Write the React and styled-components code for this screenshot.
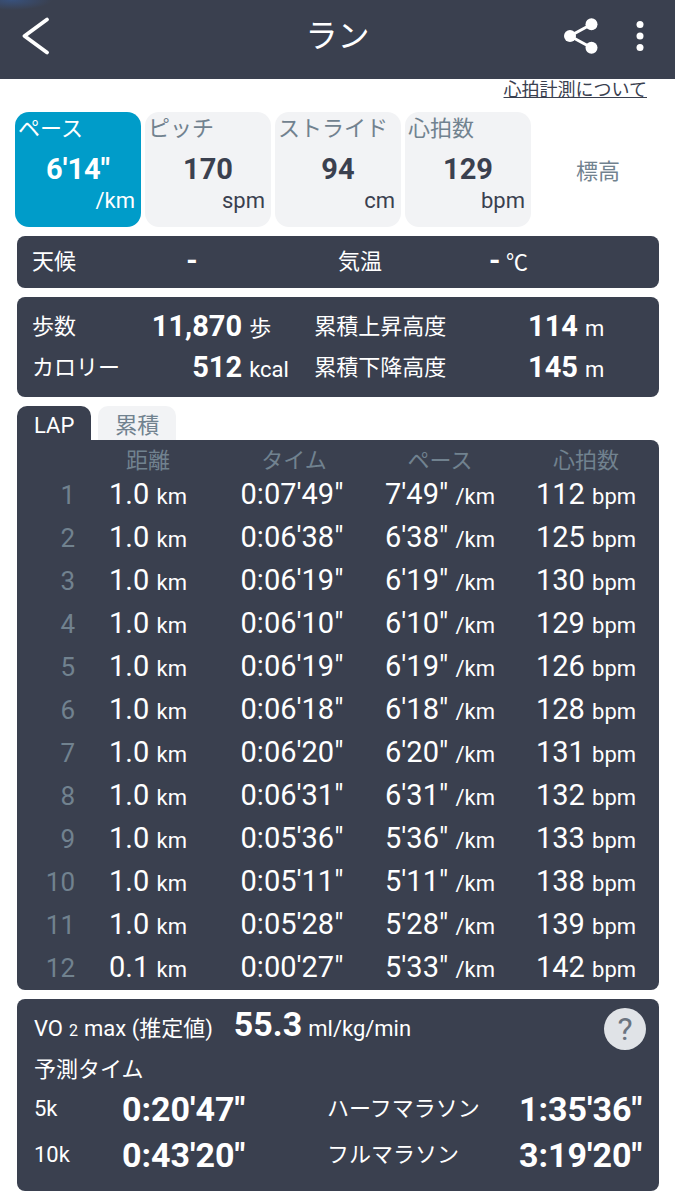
import React, { useState } from "react";
import styled, { createGlobalStyle } from "styled-components";

const metrics = [
  { label: "ペース", value: "6'14\"", unit: "/km" },
  { label: "ピッチ", value: "170", unit: "spm" },
  { label: "ストライド", value: "94", unit: "cm" },
  { label: "心拍数", value: "129", unit: "bpm" },
];

const laps = [
  ["1.0", "0:07'49\"", "7'49\"", "112"],
  ["1.0", "0:06'38\"", "6'38\"", "125"],
  ["1.0", "0:06'19\"", "6'19\"", "130"],
  ["1.0", "0:06'10\"", "6'10\"", "129"],
  ["1.0", "0:06'19\"", "6'19\"", "126"],
  ["1.0", "0:06'18\"", "6'18\"", "128"],
  ["1.0", "0:06'20\"", "6'20\"", "131"],
  ["1.0", "0:06'31\"", "6'31\"", "132"],
  ["1.0", "0:05'36\"", "5'36\"", "133"],
  ["1.0", "0:05'11\"", "5'11\"", "138"],
  ["1.0", "0:05'28\"", "5'28\"", "139"],
  ["0.1", "0:00'27\"", "5'33\"", "142"],
];

const App = () => {
  const [metric, setMetric] = useState(0);
  const [tab, setTab] = useState("lap");

  return (
    <>
      <GlobalStyle />
      <Header>
        <IconButton aria-label="戻る">
          <svg width="28" height="40" viewBox="0 0 28 40" fill="none">
            <path
              d="M25 3.5 2.5 20 25 36.5"
              stroke="#fff"
              strokeWidth="3.8"
              strokeLinecap="round"
              strokeLinejoin="round"
            />
          </svg>
        </IconButton>
        <Title>ラン</Title>
        <Actions>
          <IconButton aria-label="共有">
            <svg width="34" height="36" viewBox="0 0 34 36" fill="#fff">
              <path d="M28 6 6 18l22 12" fill="none" stroke="#fff" strokeWidth="3" />
              <circle cx="6" cy="18" r="6" />
              <circle cx="27.5" cy="6.2" r="6" />
              <circle cx="27.5" cy="29.8" r="6" />
            </svg>
          </IconButton>
          <MenuButton aria-label="メニュー">
            <svg width="8" height="32" viewBox="0 0 8 32" fill="#fff">
              <circle cx="4" cy="4.4" r="3.5" />
              <circle cx="4" cy="16" r="3.5" />
              <circle cx="4" cy="27.6" r="3.5" />
            </svg>
          </MenuButton>
        </Actions>
      </Header>

      <LinkRow>
        <a href="#heart-rate">心拍計測について</a>
      </LinkRow>

      <Metrics>
        {metrics.map((m, i) => (
          <MetricCard
            key={m.label}
            $active={metric === i}
            aria-pressed={metric === i}
            onClick={() => setMetric(i)}
          >
            <MetricLabel>{m.label}</MetricLabel>
            <MetricValue>{m.value}</MetricValue>
            <MetricUnit>{m.unit}</MetricUnit>
          </MetricCard>
        ))}
        <PlainMetric>標高</PlainMetric>
      </Metrics>

      <Main>
        <Weather>
          <dt>天候</dt>
          <dd>
            <Value>-</Value>
          </dd>
          <dt>気温</dt>
          <dd>
            <Value>-</Value> <Unit>℃</Unit>
          </dd>
        </Weather>

        <Stats>
          <Stat label="歩数" value="11,870" unit="歩" />
          <Stat label="累積上昇高度" value="114" unit="m" />
          <Stat label="カロリー" value="512" unit="kcal" />
          <Stat label="累積下降高度" value="145" unit="m" />
        </Stats>

        <section>
          <Tabs role="tablist">
            <Tab role="tab" $active={tab === "lap"} aria-selected={tab === "lap"} onClick={() => setTab("lap")}>
              LAP
            </Tab>
            <Tab role="tab" $active={tab === "total"} aria-selected={tab === "total"} onClick={() => setTab("total")}>
              累積
            </Tab>
          </Tabs>
          <LapPanel>
            <LapTable>
              <thead>
                <tr>
                  <td />
                  <th scope="col">距離</th>
                  <th scope="col">タイム</th>
                  <th scope="col">ペース</th>
                  <th scope="col">心拍数</th>
                </tr>
              </thead>
              <tbody>
                {laps.map(([distance, time, pace, heartRate], i) => (
                  <tr key={i}>
                    <th scope="row">{i + 1}</th>
                    <td>
                      {distance} <Unit>km</Unit>
                    </td>
                    <TimeCell>{time}</TimeCell>
                    <td>
                      {pace} <Unit>/km</Unit>
                    </td>
                    <td>
                      {heartRate} <Unit>bpm</Unit>
                    </td>
                  </tr>
                ))}
              </tbody>
            </LapTable>
          </LapPanel>
        </section>

        <Forecast>
          <VoRow>
            <VoText>
              <span>VO</span>
              <small>2</small>
              <span>max (推定値)</span>
              <BigValue>55.3</BigValue>
              <span>ml/kg/min</span>
            </VoText>
            <HelpButton aria-label="ヘルプ">?</HelpButton>
          </VoRow>
          <ForecastTitle>予測タイム</ForecastTitle>
          <ForecastGrid>
            <dt>5k</dt>
            <dd>0:20'47"</dd>
            <dt>ハーフマラソン</dt>
            <dd>1:35'36"</dd>
            <dt>10k</dt>
            <dd>0:43'20"</dd>
            <dt>フルマラソン</dt>
            <dd>3:19'20"</dd>
          </ForecastGrid>
        </Forecast>
      </Main>
    </>
  );
};

const Stat = ({ label, value, unit }) => (
  <StatItem>
    <dt>{label}</dt>
    <dd>
      <Value>{value}</Value>
      <Unit>{unit}</Unit>
    </dd>
  </StatItem>
);

const navy = "#3a404f";
const muted = "#71828f";
const pale = "#f2f3f5";

const GlobalStyle = createGlobalStyle`
  * {
    box-sizing: border-box;
  }
  body {
    margin: 0;
    background: #fff;
    color: #fff;
    font: 22px/32px Roboto, "Noto Sans CJK JP", sans-serif;
  }
  button {
    border: 0;
    padding: 0;
    background: none;
    color: inherit;
    font: inherit;
    cursor: pointer;
  }
  dl, dd {
    margin: 0;
  }
`;

const Header = styled.header`
  display: grid;
  grid-template-columns: 1fr auto 1fr;
  align-items: center;
  height: 79px;
  padding: 0 22px 8px;
  background: radial-gradient(40px 10px at 12px 0, #38517c, ${navy});
`;

const Title = styled.h1`
  margin: 0;
  font-size: 32px;
  font-weight: 400;
  line-height: 40px;
`;

const Actions = styled.div`
  display: flex;
  justify-content: flex-end;
  align-items: center;
  gap: 29px;
`;

const IconButton = styled.button`
  display: flex;
  justify-self: start;
`;

const MenuButton = styled(IconButton)`
  padding: 0 9px;
`;

const LinkRow = styled.div`
  display: flex;
  justify-content: flex-end;
  height: 33px;
  padding: 0 28px;
  font-size: 18px;
  line-height: 22px;

  a {
    color: ${navy};
    text-underline-offset: 1px;
  }
`;

const Metrics = styled.div`
  display: grid;
  grid-template-columns: repeat(5, 1fr);
  gap: 4px;
  padding: 0 14px 9px 15px;
`;

const MetricCard = styled.button`
  display: flex;
  flex-direction: column;
  height: 115px;
  padding-top: 1px;
  border-radius: 14px;
  background: ${(p) => (p.$active ? "#009cc9" : pale)};
  color: ${(p) => (p.$active ? "#fff" : navy)};

  & > :first-child {
    color: ${(p) => (p.$active ? "#fff" : muted)};
  }
`;

const MetricLabel = styled.span`
  align-self: flex-start;
  padding-left: 3px;
  white-space: nowrap;
`;

const MetricValue = styled.span`
  align-self: center;
  font-size: 29px;
  font-weight: 700;
  line-height: 48px;
`;

const MetricUnit = styled.span`
  align-self: flex-end;
  padding-right: 6px;
  line-height: 16px;
`;

const PlainMetric = styled.button`
  padding-top: 4px;
  color: ${muted};
`;

const Main = styled.main`
  display: grid;
  gap: 9px;
  padding: 0 16px 9px 17px;
`;

const Value = styled.b`
  font-size: 29px;
  line-height: 1;
`;

const Unit = styled.span`
  font-size: 22px;
  line-height: 1;
`;

const Weather = styled.dl`
  display: grid;
  grid-template-columns: 70fr 236fr 76fr 245fr;
  align-items: center;
  height: 52px;
  padding: 0 0 0 15px;
  border-radius: 8px;
  background: ${navy};

  dd {
    padding-right: 56px;
    text-align: center;
  }
`;

const Stats = styled.dl`
  display: grid;
  grid-template-columns: 9fr 11fr;
  padding: 9px 0 9px 15px;
  border-radius: 8px;
  background: ${navy};
`;

const StatItem = styled.div`
  display: grid;
  grid-template-columns: auto 1fr;
  height: 41px;
  line-height: 41px;

  dd {
    display: grid;
    grid-template-columns: 1fr 74px;
    align-items: baseline;
    gap: 7px;
    text-align: right;
  }
  ${Value} {
    line-height: 41px;
  }
  ${Unit} {
    text-align: left;
  }
  &:nth-child(odd) dd {
    grid-template-columns: 1fr 65px;
  }
`;

const Tabs = styled.div`
  display: flex;
  gap: 7px;
`;

const Tab = styled.button`
  height: 34px;
  padding: 4px 17px 0;
  border-radius: 10px 10px 0 0;
  background: ${(p) => (p.$active ? navy : pale)};
  color: ${(p) => (p.$active ? "#fff" : muted)};
`;

const LapPanel = styled.div`
  padding-bottom: 1px;
  border-radius: 0 8px 8px 8px;
  background: ${navy};
`;

const LapTable = styled.table`
  width: 100%;
  table-layout: fixed;
  border-collapse: collapse;
  text-align: center;
  font-size: 29px;

  th,
  td {
    padding: 0;
    font-weight: 400;
    vertical-align: baseline;
  }
  th {
    color: ${muted};
  }
  thead {
    font-size: 22px;
    line-height: 25px;
  }
  thead th {
    padding-top: 8px;
  }
  thead td {
    width: 58px;
  }
  tbody {
    line-height: 43px;
  }
  tbody th {
    font-size: 26px;
    line-height: 41px;
    text-align: right;
  }
`;

const TimeCell = styled.td`
  && {
    padding-right: 4px;
  }
`;

const Forecast = styled.section`
  padding: 9px 13px 13px 17px;
  border-radius: 8px;
  background: ${navy};
`;

const VoRow = styled.div`
  display: flex;
  align-items: flex-start;
  justify-content: space-between;
  height: 46px;
`;

const VoText = styled.div`
  display: flex;
  align-items: baseline;
  gap: 6px;

  small {
    font-size: 16px;
  }
`;

const BigValue = styled.b`
  padding-left: 15px;
  font-size: 34px;
`;

const HelpButton = styled.button`
  width: 42px;
  height: 42px;
  border-radius: 50%;
  background: #e0e3e7;
  color: #6b7480;
  font-size: 32px;
`;

const ForecastTitle = styled.h2`
  margin: 0;
  font-size: 22px;
  font-weight: 400;
  line-height: 32px;
`;

const ForecastGrid = styled.dl`
  display: grid;
  grid-template-columns: 88fr 205fr 192fr 127fr;
  line-height: 46px;

  dd {
    font-size: 34px;
    font-weight: 700;
  }
`;

export default App;
